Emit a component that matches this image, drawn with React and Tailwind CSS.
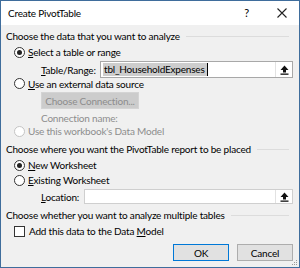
import React from "react";

const Radio = ({ checked, disabled }) => (
    <span
        className={`w-[11px] h-[11px] rounded-full border bg-white flex items-center justify-center shrink-0 ${
            disabled ? "border-[#c4c4c4]" : "border-[#333]"
        }`}
    >
        {checked && <span className="w-[5px] h-[5px] rounded-full bg-[#222]" />}
    </span>
);

const RefButton = () => (
    <div className="w-[17px] h-full border-l border-[#e2e2e2] bg-white flex items-center justify-center">
        <svg width="9" height="10" viewBox="0 0 9 10">
            <path d="M4.5 0.5 L8.5 5 L6 5 L6 7.5 L3 7.5 L3 5 L0.5 5 Z" fill="#111" />
            <rect x="0.5" y="8.5" width="8" height="1.3" fill="#111" />
        </svg>
    </div>
);

const GroupLabel = ({ children }) => (
    <div className="flex items-center h-[14px] pr-[4px]">
        <span className="whitespace-nowrap">{children}</span>
        <div className="flex-1 h-px bg-[#dcdcdc] ml-[6px] mt-[1px]" />
    </div>
);

const RadioRow = ({ checked, disabled, className, children }) => (
    <div
        className={`flex items-center gap-[3px] pl-[8px] whitespace-nowrap ${
            disabled ? "text-[#8d8d8d]" : ""
        } ${className}`}
    >
        <Radio checked={checked} disabled={disabled} />
        <span>{children}</span>
    </div>
);

const App = () => {
    return (
        <div
            className="w-[300px] h-[268px] border border-[#3f6d9c] bg-[#f0f0f0] flex flex-col text-[10px] tracking-[-0.2px] leading-[14px] text-[#000] overflow-hidden"
            style={{ fontFamily: 'Lato, "Open Sans", sans-serif' }}
        >
            <div className="h-[24px] bg-white flex items-center pl-[7px] pr-[12px] shrink-0">
                <span className="flex-1">Create PivotTable</span>
                <span className="mr-[28px] text-[11px]">?</span>
                <svg width="10" height="10" viewBox="0 0 10 10">
                    <path d="M0.5 0.5 L9.5 9.5 M9.5 0.5 L0.5 9.5" stroke="#222" strokeWidth="1.1" />
                </svg>
            </div>

            <div className="flex-1 pl-[5px] pr-[6px] pt-[4px] flex flex-col relative">
                <GroupLabel>Choose the data that you want to analyze</GroupLabel>

                <RadioRow checked className="h-[14px] mt-[2px]">
                    <u>S</u>elect a table or range
                </RadioRow>

                <div className="flex items-center pl-[35px] mt-[2px] h-[17px]">
                    <span className="w-[59px] whitespace-nowrap">
                        <u>T</u>able/Range:
                    </span>
                    <div className="flex-1 h-[17px] border border-[#a8a8a8] bg-white flex items-center">
                        <div className="flex-1 flex items-center pl-[2px]">
                            <span className="bg-[#cdcdcd] pl-[1px] pr-[2px] leading-[13px]">
                                tbl_HouseholdExpenses
                            </span>
                            <span className="w-px h-[13px] bg-black" />
                        </div>
                        <RefButton />
                    </div>
                </div>

                <RadioRow className="h-[11px]">
                    <u>U</u>se an external data source
                </RadioRow>

                <div className="pl-[35px] mt-[3px]">
                    <div className="w-[98px] h-[17px] border border-[#d4d4d4] bg-[#cccccc] text-[#8d8d8d] flex items-center justify-center whitespace-nowrap">
                        Choose Connection...
                    </div>
                    <div className="text-[#8d8d8d] mt-[2px] h-[14px] whitespace-nowrap">Connection name:</div>
                </div>

                <RadioRow disabled className="h-[12px]">
                    Use this workbook's Data Model
                </RadioRow>

                <div className="mt-[5px]">
                    <GroupLabel>Choose where you want the PivotTable report to be placed</GroupLabel>
                </div>

                <RadioRow checked className="h-[14px] mt-[2px]">
                    <u>N</u>ew Worksheet
                </RadioRow>
                <RadioRow className="h-[14px] mt-[1px]">
                    <u>E</u>xisting Worksheet
                </RadioRow>

                <div className="flex items-center pl-[35px] mt-[2px] h-[15px]">
                    <span className="w-[43px] whitespace-nowrap">
                        <u>L</u>ocation:
                    </span>
                    <div className="flex-1 h-[15px] border border-[#cfcfcf] bg-white flex items-center">
                        <div className="flex-1" />
                        <RefButton />
                    </div>
                </div>

                <div className="mt-[4px]">
                    <GroupLabel>Choose whether you want to analyze multiple tables</GroupLabel>
                </div>

                <div className="flex items-center gap-[4px] pl-[8px] mt-[2px] h-[14px] whitespace-nowrap">
                    <span className="w-[11px] h-[11px] border border-[#333] bg-white shrink-0" />
                    <span>
                        Add this data to the Data <u>M</u>odel
                    </span>
                </div>

                <div className="flex justify-end gap-[8px] mt-[6px]">
                    <div className="w-[56px] h-[17px] border border-[#0078d7] bg-[#e1e1e1] flex items-center justify-center">
                        OK
                    </div>
                    <div className="w-[56px] h-[17px] border border-[#adadad] bg-[#e1e1e1] flex items-center justify-center">
                        Cancel
                    </div>
                </div>

                <svg className="absolute right-[1px] bottom-[1px]" width="6" height="6" viewBox="0 0 6 6">
                    <rect x="4" y="0" width="1" height="1" fill="#9a9a9a" />
                    <rect x="2" y="2" width="1" height="1" fill="#9a9a9a" />
                    <rect x="4" y="2" width="1" height="1" fill="#9a9a9a" />
                    <rect x="0" y="4" width="1" height="1" fill="#9a9a9a" />
                    <rect x="2" y="4" width="1" height="1" fill="#9a9a9a" />
                    <rect x="4" y="4" width="1" height="1" fill="#9a9a9a" />
                </svg>
            </div>
        </div>
    );
};

export default App;
